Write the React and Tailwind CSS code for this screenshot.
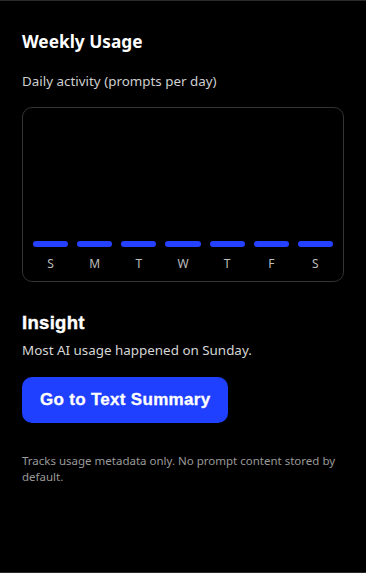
const days = ["S", "M", "T", "W", "T", "F", "S"];

export default function App() {
  return (
    <div
      className="w-full h-[573px] bg-black border-t border-b border-[#2a2a2a] box-border"
      style={{ fontFamily: '"Noto Sans", "Open Sans", sans-serif' }}
    >
      <div className="px-[22px] pt-[28px]">
        <h1 className="text-[17.3px] font-bold text-white leading-[26px]">Weekly Usage</h1>
        <p className="mt-[16px] text-[13.4px] text-[#cfcfcf] leading-[20px]">
          Daily activity (prompts per day)
        </p>

        <div className="mt-[16px] h-[175px] rounded-[10px] border border-[#333] px-[10px] pb-[8px] flex flex-col justify-end">
          <div className="grid grid-cols-7 gap-[9px]">
            {days.map((d, i) => (
              <div key={i} className="flex flex-col items-center">
                <div className="w-full h-[6px] rounded-full bg-[#2541ff]" />
                <span className="mt-[8px] text-[12px] text-[#bdbdbd] leading-[18px]">{d}</span>
              </div>
            ))}
          </div>
        </div>

        <h2
          className="mt-[29px] text-[18.5px] font-bold text-white leading-[24px] tracking-[0.3px]"
          style={{ fontFamily: '"Liberation Sans", Arial, sans-serif', WebkitTextStroke: "0.4px white" }}
        >
          Insight
        </h2>
        <p className="mt-[5px] text-[13.4px] text-[#d6d6d6] leading-[20px]">
          Most AI usage happened on Sunday.
        </p>

        <button
          className="mt-[17px] h-[46px] px-[18px] rounded-[10px] bg-[#1f40ff] text-white text-[17px] font-bold tracking-[0.3px]"
          style={{ fontFamily: '"Liberation Sans", Arial, sans-serif', WebkitTextStroke: "0.3px white" }}
        >
          Go to Text Summary
        </button>

        <p className="mt-[30px] text-[11.5px] text-[#9a9a9a] leading-[16px]">
          Tracks usage metadata only. No prompt content stored by default.
        </p>
      </div>
    </div>
  );
}
